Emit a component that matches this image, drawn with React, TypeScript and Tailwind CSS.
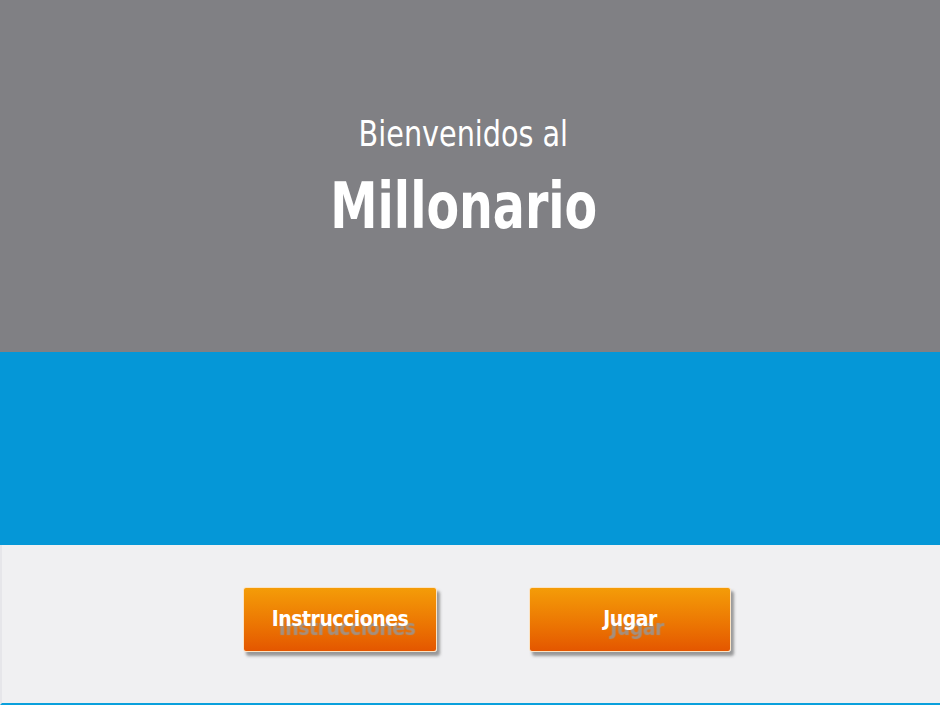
const font = { fontFamily: '"DejaVu Sans Condensed", "DejaVu Sans", sans-serif' };

const Btn = ({ label, w }: { label: string; w: string }) => {
  return (
    <button
      className={`${w} h-[65px] rounded-[3px] border border-[#fbe3c4] bg-gradient-to-b from-[#f49c08] to-[#e45600] text-white font-bold text-[21px] tracking-[-0.5px] shadow-[3px_4px_3px_rgba(80,80,80,0.55)] [text-shadow:7px_9px_1px_rgba(150,150,150,0.85)]`}
      style={font}
    >
      {label}
    </button>
  );
};

export default function App() {
  return (
    <div className="w-[940px] h-[705px] flex flex-col overflow-hidden" style={font}>
      <div className="h-[352px] bg-[#808084] flex flex-col items-center pt-[110px] pr-[13px] text-white">
        <div className="text-[36px] leading-[48px] scale-x-[0.885]">Bienvenidos al</div>
        <div className="text-[64px] font-bold leading-[70px] mt-[13px] scale-x-[0.825]">Millonario</div>
      </div>
      <div className="h-[193px] bg-[#0597d7]" />
      <div className="flex-1 bg-[#f0f0f2] border-l-2 border-[#e6e6ea] border-b-2 border-b-[#0aa0dc] flex justify-center items-start pt-[42px] gap-[92px] pl-[32px]">
        <Btn label="Instrucciones" w="w-[194px]" />
        <Btn label="Jugar" w="w-[202px]" />
      </div>
    </div>
  );
}
